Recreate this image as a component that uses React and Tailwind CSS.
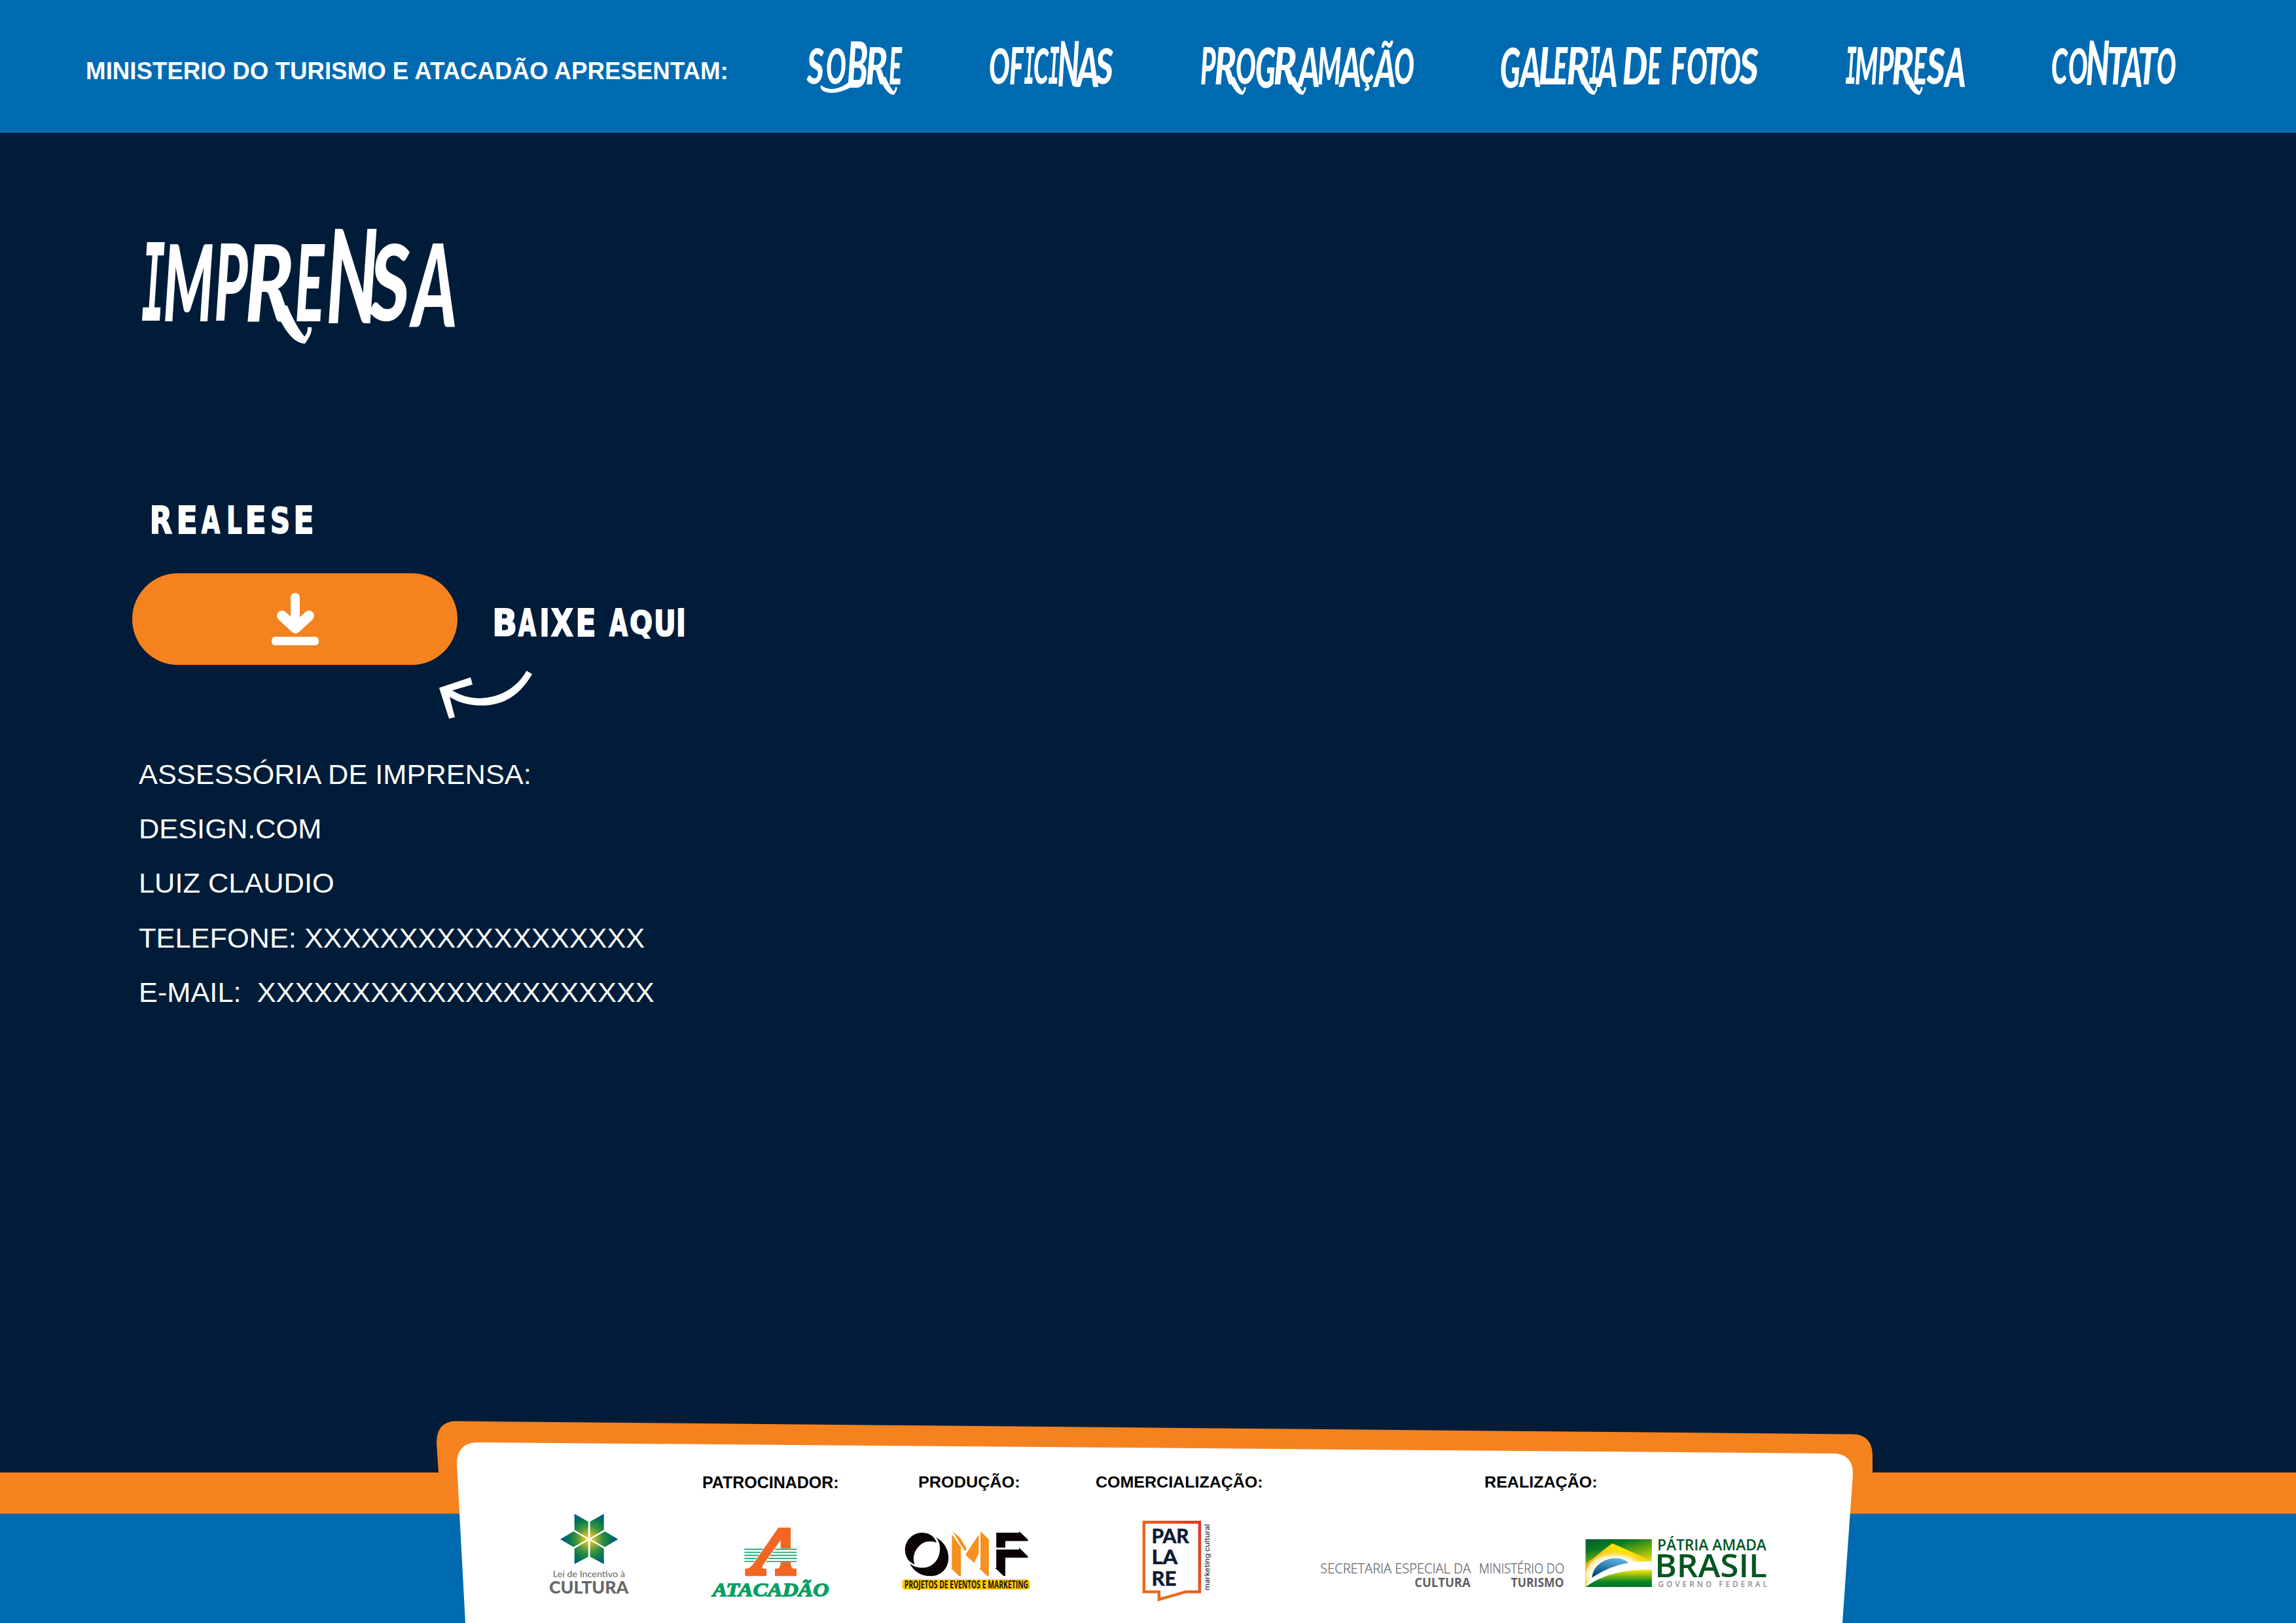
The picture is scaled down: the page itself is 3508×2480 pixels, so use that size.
import { useLayoutEffect, useRef } from "react";

/*
 * Hand-lettered words. Every glyph is [text, left, right, top, bottom]: the box
 * that its ink fills inside the word. Top and bottom fall back to the word's own.
 */
function Lettering({ glyphs, top, bottom, className, tails = [], tailScale = 1 }) {
  const ref = useRef(null);

  useLayoutEffect(() => {
    const ctx = document.createElement("canvas").getContext("2d");
    [...ref.current.querySelectorAll("span")].forEach((el, i) => {
      const [text, x0, x1, y0 = top, y1 = bottom] = glyphs[i];
      if (!text.trim()) return;
      const cs = getComputedStyle(el);
      ctx.font = `${cs.fontStyle} ${cs.fontWeight} ${cs.fontSize} ${cs.fontFamily}`;
      const m = ctx.measureText(text);
      const sx = (x1 - x0) / (m.actualBoundingBoxRight + m.actualBoundingBoxLeft);
      const sy = (y1 - y0) / (m.actualBoundingBoxAscent + m.actualBoundingBoxDescent);
      const a = m.fontBoundingBoxAscent;
      const d = m.fontBoundingBoxDescent;
      const baseline = (el.offsetHeight - a - d) / 2 + a;
      const e = x0 - el.offsetLeft + m.actualBoundingBoxLeft * sx;
      const f = y0 - el.offsetTop - sy * (baseline - m.actualBoundingBoxAscent);
      el.style.transform = `matrix(${sx},0,0,${sy},${e},${f})`;
    });
  }, [glyphs, top, bottom]);

  return (
    <span ref={ref} className={`relative block shrink-0 whitespace-nowrap leading-none ${className}`}>
      {glyphs.map(([text, , , , , font], i) => (
        <span key={i} className={`inline-block origin-top-left whitespace-pre leading-none ${font || ""}`}>
          {text}
        </span>
      ))}
      {tails.length > 0 && (
        <svg className="absolute left-0 top-0 overflow-visible" width="1" height="1">
          {tails.map(([x, y]) => (
            <path
              key={x}
              transform={`translate(${x} ${y}) scale(${tailScale})`}
              d="M-27 -26L-4 -24C4 -4 13 12 22 23C26 20 27 14 27 9L33 9C34 17 29 26 23 34C2 34 -13 4 -27 -26Z"
              fill="#fff"
            />
          ))}
        </svg>
      )}
    </span>
  );
}

const SERIF_I = "font-['Liberation_Mono']";
const brush = "font-['Lato','Open_Sans',sans-serif] font-black italic text-white";
const carved = "font-['DejaVu_Sans',sans-serif] font-bold text-white text-[40px] [-webkit-text-stroke:1.5px_white]";
const label = "font-['Liberation_Sans',Arial,sans-serif] font-bold text-black text-[26px] h-7";

const NAV = [
  {
    width: "w-[147px]",
    glyphs: [["S", 0, 27], ["O", 31, 60], ["B", 63, 93, 64, 134], ["R", 92, 123], ["E", 127, 147]],
    tails: [[123, 129]],
    swoosh: true,
  },
  {
    width: "w-[190px]",
    glyphs: [["O", 0, 30], ["F", 31, 53], ["I", 53, 69, 73, 129, SERIF_I], ["C", 68, 91], ["I", 90, 107, 73, 129, SERIF_I], ["N", 105, 137, 63, 132], ["A", 130, 166, 73, 133], ["S", 161, 189]],
  },
  {
    width: "w-[325px]",
    glyphs: [["P", 0, 23], ["R", 22, 53], ["O", 54, 83], ["G", 84, 114, 72, 135], ["R", 112, 145], ["A", 146, 180, 73, 133], ["M", 179, 214], ["A", 210, 243, 73, 133], ["Ç", 242, 266, 73, 140], ["Ã", 262, 296, 61, 133], ["O", 296, 325]],
    tails: [[53, 129], [145, 129]],
  },
  {
    width: "w-[394px]",
    glyphs: [["G", 0, 30, 72, 135], ["A", 27, 60, 73, 133], ["L", 59, 83], ["E", 81, 103], ["R", 102, 134], ["I", 135, 152, 73, 129, SERIF_I], ["A", 145, 177, 73, 133], [" "], ["D", 187, 223], ["E", 225, 246], [" "], ["F", 261, 284], ["O", 285, 315], ["T", 314, 342], ["O", 336, 366], ["S", 364, 394]],
    tails: [[132, 129]],
  },
  {
    width: "w-[182px]",
    glyphs: [["I", 0, 17, 73, 129, SERIF_I], ["M", 15, 49], ["P", 50, 74], ["R", 72, 103], ["E", 104, 125], ["S", 123, 152], ["A", 149, 182, 73, 133]],
    tails: [[102, 129]],
  },
  {
    width: "w-[189px]",
    glyphs: [["C", 0, 25], ["O", 26, 54], ["N", 53, 88, 63, 130], ["T", 87, 115], ["A", 105, 137, 73, 133], ["T", 134, 163], ["O", 161, 189]],
  },
];

const TAGLINE = [["MINISTERIO DO TURISMO E ATACADÃO APRESENTAM:", 0, 979]];

const TITLE = [
  ["I", 0, 35, 23, 142, SERIF_I],
  ["M", 35, 108],
  ["P", 113, 162],
  ["R", 161, 228],
  ["E", 236, 280],
  ["N", 285, 359, 0, 145],
  ["S", 347, 409],
  ["A", 408, 478, 23, 151],
];
const TITLE_TAILS = [[226, 142]];

const RELEASE = [["R", 0, 30], ["E", 41, 67], ["A", 76, 104], ["L", 117, 137], ["E", 146, 172], ["S", 183, 208], ["E", 220, 245]];
const DOWNLOAD_HERE = [["B", 0, 31], ["A", 36, 63], ["I", 71, 80], ["X", 86, 120], ["E", 127, 152], [" "], ["A", 175, 203], ["Q", 208, 239, 0, 45], ["U", 246, 273], ["I", 280, 289]];

const PATROCINADOR = [["PATROCINADOR:", 0, 206, 5, 23]];
const PRODUCAO = [["PRODUÇÃO:", 0, 153, 0, 27]];
const COMERCIALIZACAO = [["COMERCIALIZAÇÃO:", 0, 253, 0, 27]];
const REALIZACAO = [["REALIZAÇÃO:", 0, 170, 0, 27]];

function Header() {
  return (
    <header className="flex h-[203px] shrink-0 bg-[#006ab1] pl-[133px]">
      <Lettering
        glyphs={TAGLINE}
        top={87}
        bottom={121}
        className="h-full w-[979px] font-['Liberation_Sans',Arial,sans-serif] text-[38px] font-bold text-white"
      />
      <nav className="ml-[120px] flex gap-[133px]">
        {NAV.map((item, i) => (
          <a key={i} className="relative block">
            <Lettering
              glyphs={item.glyphs}
              top={73}
              bottom={129}
              tails={item.tails}
              tailScale={0.47}
              className={`h-full text-[80px] ${brush} ${item.width}`}
            />
            {item.swoosh && (
              <svg className="absolute left-5 top-[122px]" width="64" height="22" viewBox="0 0 64 22">
                <path d="M2 8C0 16 8 20 20 20C38 19 52 10 62 0H48C40 9 28 14 17 14C10 13 6 11 2 8Z" fill="#fff" />
              </svg>
            )}
          </a>
        ))}
      </nav>
    </header>
  );
}

function DownloadIcon() {
  return (
    <svg width="74" height="84" viewBox="415 905 74 84" fill="none" stroke="#fff" strokeWidth="14" strokeLinecap="round" strokeLinejoin="round">
      <path d="M452 914V960" />
      <path d="M432 942L452.500 961L473 942" strokeWidth="16" />
      <rect x="416" y="974" width="72" height="13" rx="5.500" fill="#fff" stroke="none" />
    </svg>
  );
}

function CurvedArrow() {
  return (
    <svg width="144" height="76" viewBox="670 1024 144 76">
      <path
        d="M804.500 1025L813 1030C790 1070 761 1078 734 1078C716 1078 700 1073 687 1065L695 1096L686 1098L671 1051L719 1035L722 1046L691 1055C704 1063 718 1067 734 1067C764 1066 790 1051 804.500 1025Z"
        fill="#fff"
      />
    </svg>
  );
}

function CulturaAtacadaoLogos() {
  return (
    <svg className="shrink-0" width="480" height="170" viewBox="0 0 1440 510">
      <defs>
        <radialGradient id="star" gradientUnits="userSpaceOnUse" cx="270" cy="186" r="134">
          <stop offset="0" stopColor="#f5d40f" />
          <stop offset="0.200" stopColor="#b5b82d" />
          <stop offset="0.450" stopColor="#3c933f" />
          <stop offset="0.700" stopColor="#04794f" />
          <stop offset="1" stopColor="#00499e" />
        </radialGradient>
      </defs>
      <path
        fill="url(#star)"
        d="M203 70L266 105V181L203 143ZM338 70L275 105V181L338 143ZM138 186L199 150L262 186L199 222ZM403 186L342 150L279 186L342 222ZM203 300L266 266V191L203 229ZM338 300L275 266V191L338 229Z"
      />
      <g fill="#666768" fontFamily="Lato, sans-serif">
        <text x="104" y="361" fontSize="40" textLength="331" lengthAdjust="spacingAndGlyphs">Lei de Incentivo à</text>
        <text x="87" y="434" fontSize="78" fontWeight="900" textLength="364" lengthAdjust="spacingAndGlyphs">CULTURA</text>
      </g>
      <path d="M1138 133H1194V228H1148V190L1070 300Q1058 318 1070 321H1083V355H985V321H992Q1010 318 1022 300Z" fill="#f36523" />
      <path d="M1148 291H1194Q1194 318 1208 321H1221V355H1122V321H1133Q1148 318 1148 291Z" fill="#f36523" />
      <path d="M982 232H1067M982 246H1057M982 260H1047M982 274H1037M982 288H1027M1122 232H1222M1112 246H1222M1102 260H1222M1092 274H1222M1082 288H1222" stroke="#079f62" strokeWidth="5" />
      <text x="836" y="447" fontSize="88" fontFamily="Liberation Serif, serif" fontWeight="700" fontStyle="italic" fill="#079f62" stroke="#079f62" strokeWidth="4" textLength="534" lengthAdjust="spacingAndGlyphs">ATACADÃO</text>
    </svg>
  );
}

function OmfParlareLogos() {
  return (
    <svg className="shrink-0" width="540" height="170" viewBox="0 0 1568 510" preserveAspectRatio="none">
      <defs>
        <linearGradient id="frame" x1="0.300" y1="0.600" x2="1" y2="0">
          <stop offset="0" stopColor="#ea6a1d" />
          <stop offset="1" stopColor="#df3526" />
        </linearGradient>
      </defs>
      <g fill="#0a0206">
        <path d="M235 202C225 165 190 155 168 156C125 158 95 195 95 235C96 270 115 295 138 301C125 265 140 225 175 203C195 193 220 194 235 202Z" />
        <path d="M232 178C265 195 288 230 288 270C288 320 255 355 208 355C165 355 130 330 116 296C135 315 165 320 190 315C230 305 252 265 250 225C249 205 243 190 232 178Z" />
        <path d="M500 156H601V149L640 187V194H540V224H500ZM500 233H601V225L640 264V271H540V355H533L495 318H500Z" />
      </g>
      <path fill="#f7901e" d="M303 163L343 222V355H335L298 317H303ZM306 149L340 180L369 230L361 240L345 216ZM422 165V252L402 295L363 257ZM430 149L467 187V355H460L423 318H430Z" />
      <rect x="82" y="370" width="568" height="47" rx="14" fill="#fccb0a" />
      <text x="92" y="411" fontSize="47" fontFamily="Open Sans, sans-serif" fontWeight="700" fill="#1a1208" textLength="550" lengthAdjust="spacingAndGlyphs">PROJETOS DE EVENTOS E MARKETING</text>
      <path d="M1155 108H1402V427H1340L1222 462V427H1155Z" fill="none" stroke="url(#frame)" strokeWidth="13" />
      <g fill="#0e1a35" fontFamily="Lato, sans-serif" fontWeight="700" fontSize="94" stroke="#0e1a35" strokeWidth="2">
        <text x="1189" y="205" textLength="166" lengthAdjust="spacingAndGlyphs">PAR</text>
        <text x="1189" y="300" textLength="115" lengthAdjust="spacingAndGlyphs">LA</text>
        <text x="1189" y="398" textLength="110" lengthAdjust="spacingAndGlyphs">RE</text>
      </g>
      <text transform="translate(1445 420) rotate(-90)" fontSize="29" fontFamily="Inter, sans-serif" fontWeight="500" fill="#2b3040" textLength="304" lengthAdjust="spacingAndGlyphs">marketing cultural</text>
    </svg>
  );
}

function GovernmentLogos() {
  return (
    <svg className="mt-10 shrink-0" width="760" height="120" viewBox="0 0 1568 360" preserveAspectRatio="none">
      <defs>
        <linearGradient id="sky" gradientUnits="userSpaceOnUse" x1="930" y1="66" x2="985" y2="215">
          <stop offset="0" stopColor="#00602a" />
          <stop offset="0.300" stopColor="#0a7a22" />
          <stop offset="1" stopColor="#e8e000" />
        </linearGradient>
        <linearGradient id="gold" x1="0" y1="0" x2="1" y2="0">
          <stop offset="0" stopColor="#f8ab2c" />
          <stop offset="0.500" stopColor="#ffe600" />
          <stop offset="1" stopColor="#f6cf1c" />
        </linearGradient>
        <radialGradient id="halo" gradientUnits="userSpaceOnUse" cx="1006" cy="230" r="108">
          <stop offset="0.700" stopColor="#fffbe8" />
          <stop offset="0.820" stopColor="#fff0b0" />
          <stop offset="1" stopColor="#fbd33a" stopOpacity="0.200" />
        </radialGradient>
        <linearGradient id="globe" x1="0.600" y1="0" x2="0.200" y2="1">
          <stop offset="0" stopColor="#5aaee0" />
          <stop offset="0.900" stopColor="#004479" />
        </linearGradient>
        <linearGradient id="field" x1="0" y1="0" x2="0" y2="1">
          <stop offset="0" stopColor="#f8ea00" />
          <stop offset="0.700" stopColor="#0b8428" />
          <stop offset="1" stopColor="#00762f" />
        </linearGradient>
      </defs>
      <g fill="#5f6062" fontFamily="Open Sans, Noto Sans, sans-serif" fontSize="61">
        <text x="77" y="222" fontWeight="300" stroke="#5f6062" strokeWidth="0.800" textLength="474" lengthAdjust="spacingAndGlyphs">SECRETARIA ESPECIAL DA</text>
        <text x="374" y="285" fontWeight="700" textLength="176" lengthAdjust="spacingAndGlyphs">CULTURA</text>
        <text x="577" y="222" fontWeight="300" stroke="#5f6062" strokeWidth="0.800" textLength="269" lengthAdjust="spacingAndGlyphs">MINISTÉRIO DO</text>
        <text x="678" y="285" fontWeight="700" textLength="167" lengthAdjust="spacingAndGlyphs">TURISMO</text>
      </g>
      <rect x="913" y="66" width="209" height="219" fill="url(#sky)" />
      <path d="M913 180L997 85L1122 165V285H913Z" fill="url(#gold)" />
      <path d="M913 215C930 150 970 122 1006 122C1040 122 1068 140 1085 166L1000 240L913 285Z" fill="url(#halo)" />
      <path d="M933 250C933 190 970 153 1008 153C1025 153 1038 160 1048 174L1000 215Z" fill="url(#globe)" />
      <path d="M913 285C917 270 924 256 933 243C985 190 1045 165 1122 167V209L1000 285Z" fill="#fff" />
      <path d="M913 285C970 225 1040 203 1122 207V285Z" fill="url(#field)" />
      <g fill="#00561f" fontFamily="Open Sans, Noto Sans, sans-serif">
        <text x="1139" y="117" fontSize="70" fontWeight="600" textLength="344" lengthAdjust="spacingAndGlyphs">PÁTRIA AMADA</text>
        <text x="1131" y="239" fontSize="144" fontWeight="600" textLength="354" lengthAdjust="spacingAndGlyphs">BRASIL</text>
      </g>
      <g transform="translate(1142 285) scale(0.688 1)">
        <text fontSize="35" fontWeight="600" fontFamily="Open Sans, Noto Sans, sans-serif" fill="#8b8c8e" textLength="499" lengthAdjust="spacing">GOVERNO FEDERAL</text>
      </g>
    </svg>
  );
}

function Footer() {
  return (
    <footer className="relative h-[310px] w-full shrink-0">
      <div className="h-20" />
      <div className="h-[63px] bg-[#f6821f]" />
      <div className="h-[167px] bg-[#006ab1]" />
      <svg className="absolute inset-0" width="3508" height="310" viewBox="0 2170 3508 310">
        <path d="M670 2250L667 2205Q667 2173 695 2171.500L2832 2191.500Q2860 2193 2861 2223V2313H672Z" fill="#f6821f" />
        <path d="M711 2480L698 2237Q698 2206 727 2204L2804 2221Q2831 2223 2831 2252L2815 2480Z" fill="#fff" />
      </svg>
      <div className="absolute inset-0">
        <div className="flex pl-[1074px] pt-[81px]">
          <Lettering glyphs={PATROCINADOR} className={`w-[206px] ${label}`} />
          <Lettering glyphs={PRODUCAO} className={`ml-[124px] w-[153px] ${label}`} />
          <Lettering glyphs={COMERCIALIZACAO} className={`ml-[118px] w-[253px] ${label}`} />
          <Lettering glyphs={REALIZACAO} className={`ml-[341px] w-[170px] ${label}`} />
        </div>
        <div className="mt-[11px] flex items-start pl-[810px]">
          <CulturaAtacadaoLogos />
          <div className="w-[60px] shrink-0" />
          <OmfParlareLogos />
          <div className="w-[90px] shrink-0" />
          <GovernmentLogos />
        </div>
      </div>
    </footer>
  );
}

export default function App() {
  return (
    <div className="flex h-[2480px] w-[3508px] flex-col overflow-hidden bg-[#001c38]">
      <Header />
      <main className="flex flex-1 flex-col items-start">
        <h1 className="ml-[217px] mt-[146px]">
          <Lettering glyphs={TITLE} top={23} bottom={142} tails={TITLE_TAILS} className={`h-[176px] w-[478px] text-[160px] ${brush}`} />
        </h1>
        <h2 className="ml-[232px] mt-[248px]">
          <Lettering glyphs={RELEASE} top={0} bottom={42} className={`h-[42px] w-[245px] ${carved}`} />
        </h2>
        <div className="ml-[202px] mt-[61px] flex">
          <button className="flex h-[140px] w-[497px] items-center justify-center rounded-full bg-[#f6821f]">
            <DownloadIcon />
          </button>
          <Lettering glyphs={DOWNLOAD_HERE} top={0} bottom={42} className={`ml-[57px] mt-[54px] h-[45px] w-[289px] ${carved}`} />
        </div>
        <div className="ml-[670px] mt-2">
          <CurvedArrow />
        </div>
        <div className="ml-[212px] mt-[42px] whitespace-pre font-['Liberation_Sans',Arial,sans-serif] text-[43.35px] leading-[83.2px] text-white">
          <p>ASSESSÓRIA DE IMPRENSA:</p>
          <p>DESIGN.COM</p>
          <p>LUIZ CLAUDIO</p>
          <p>TELEFONE: XXXXXXXXXXXXXXXXXX</p>
          <p>{"E-MAIL:  XXXXXXXXXXXXXXXXXXXXX"}</p>
        </div>
      </main>
      <Footer />
    </div>
  );
}
